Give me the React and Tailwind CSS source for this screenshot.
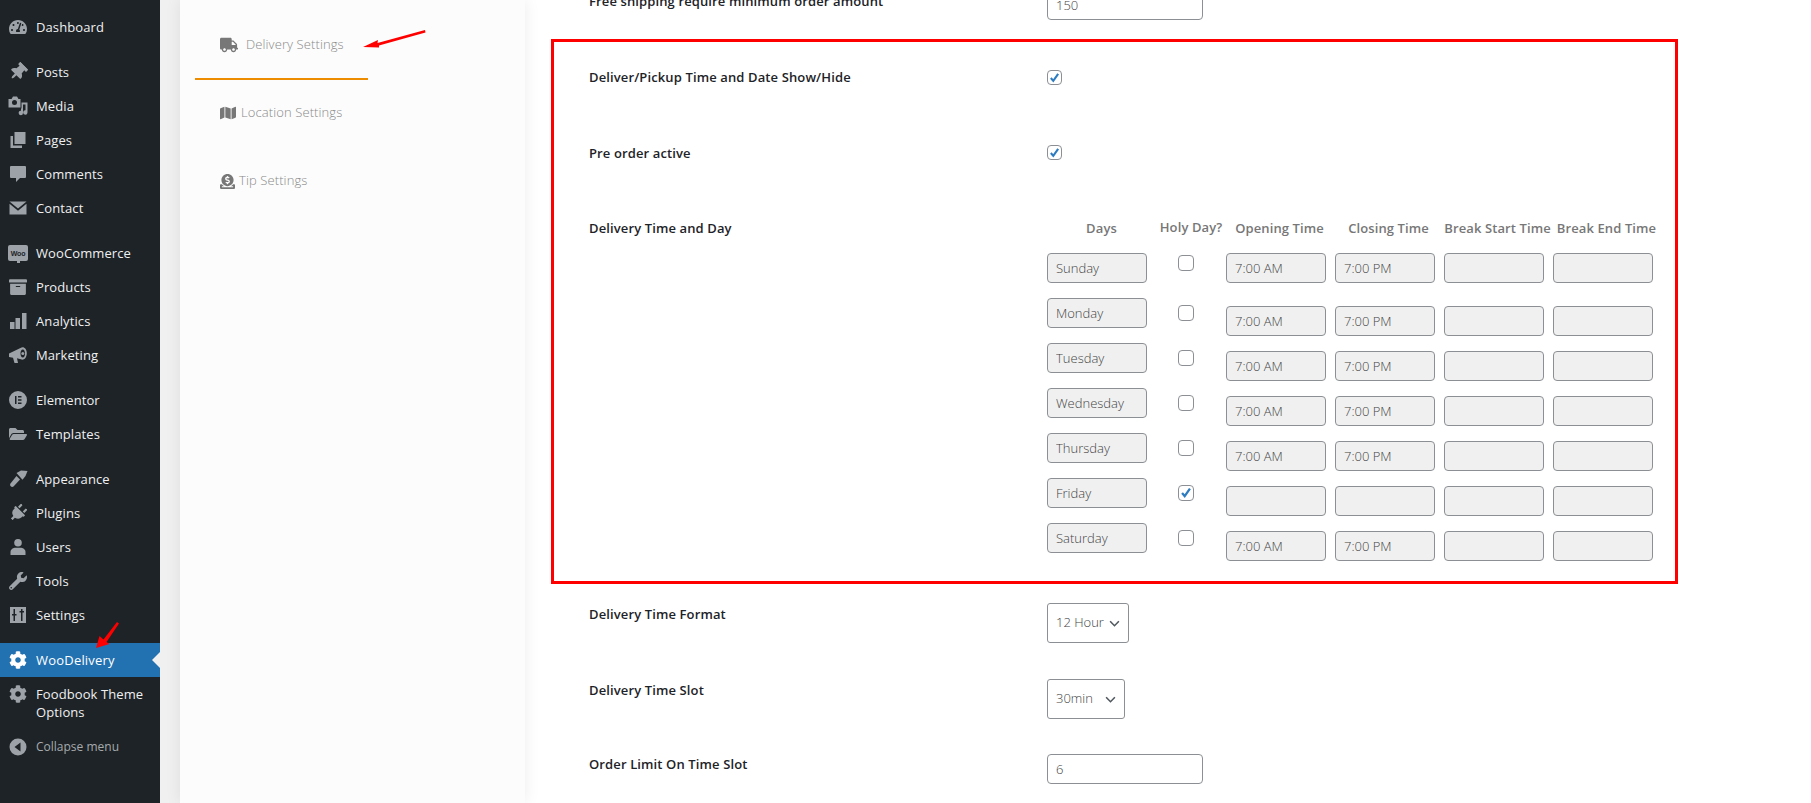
import React from "react";
import { FaTachometerAlt, FaThumbtack, FaArchive, FaFolderOpen, FaPlug, FaWrench, FaCog, FaTruck, FaMap, FaDonate } from "react-icons/fa";

const ic = "w-[20px] h-[20px]";
const Svg = ({ children }) => <svg viewBox="0 0 20 20" className={ic} fill="currentColor">{children}</svg>;

const IMedia = () => (
  <Svg>
    <path fillRule="evenodd" d="M0.500 3h3L5 .500h4L10.500 3h2v8.500h-12zM6.500 4a2.500 2.500 0 100 5 2.500 2.500 0 000-5z" />
    <path d="M13.500 6.500H19.500V16.500A2.200 2.200 0 1117.500 14.300V8.500H15V17A2.200 2.200 0 1113 14.800V12.500H13.500z" />
  </Svg>
);
const IPages = () => <Svg><path d="M6.500 2H17.500V14H6.500z" /><path d="M2.500 6H5V15.500H14V18H2.500z" /></Svg>;
const IComments = () => <Svg><path d="M3 2h14a1 1 0 011 1v10a1 1 0 01-1 1h-5l-4 4v-4H3a1 1 0 01-1-1V3a1 1 0 011-1z" /></Svg>;
const IContact = () => <Svg><path d="M1.500 3.500h17l-8.500 7zM1.500 5.800l8.500 7 8.500-7V16.500h-17z" /></Svg>;
const IWoo = () => (
  <span className="relative flex items-center justify-center w-[20px] h-[16px] rounded-[2px] bg-[#9ca2a7] text-[#1d2327] text-[7px] font-bold leading-none tracking-[-0.2px]" style={{ fontFamily: "Liberation Sans" }}>
    Woo
    <span className="absolute bottom-[-2px] left-[9px] w-[3px] h-[3px] bg-[#9ca2a7]" />
  </span>
);
const IBars = () => <Svg><path d="M2 11h4.500v7H2zM7.500 7H12v11H7.500zM14 2h4.500v16H14z" /></Svg>;
const IElementor = () => <Svg><path fillRule="evenodd" d="M10 1a9 9 0 110 18 9 9 0 010-18zM7 6v8h1.500V6zm3 0v1.500h3.500V6zm0 3.200v1.500h3.500V9.200zm0 3.300V14h3.500v-1.500z" /></Svg>;
const ISettings = () => <Svg><path fillRule="evenodd" d="M2 2h16v16H2zM5.500 4v5H4v1.500h1.500V16H7v-5.500h1.500V9H7V4zm7.500 0v2h-1.500v1.500H13V16h1.500V7.500H16V6h-1.500V4z" /></Svg>;
const ICollapse = () => <Svg><path fillRule="evenodd" d="M10 1.500a8.500 8.500 0 110 17 8.500 8.500 0 010-17zM12.500 5.500L6.500 10l6 4.500z" /></Svg>;
const IMegaphone = () => (
  <Svg>
    <path fillRule="evenodd" d="M1 8.500L12.500 3C15 .800 18.800 3 18.800 8S15.500 15.800 12.800 14.300L9 13.300 10 18H6.500L5 12.800 1 12zM14.800 4.500C13.300 4.500 12.500 6.200 12.500 8.500S13.300 12.500 14.800 12.500 17 10.800 17 8.500 16.300 4.500 14.800 4.500z" />
    <circle cx="14.800" cy="8.500" r="1.500" />
  </Svg>
);
const IBrush = () => (
  <Svg>
    <path d="M8.500 4L13 1.500 19.500 2 17.500 7 14.500 10.800z" />
    <path d="M8.500 7L12 10.500 5.500 17.500C3.800 19 1 16.500 2.500 14.500z" />
  </Svg>
);
const IUser = () => (
  <Svg>
    <circle cx="10" cy="5.800" r="3.800" />
    <path d="M2.500 18v-3c0-2.800 3-4.200 5-4.200h5c2 0 5 1.400 5 4.200v3z" />
  </Svg>
);
const IPin = () => <FaThumbtack size={18} className="rotate-45" />;
const IPlug = () => <FaPlug size={18} className="rotate-45" />;
const fa = (I, s = 18) => () => <I size={s} />;

const groups = [
  [["Dashboard", fa(FaTachometerAlt)]],
  [["Posts", IPin], ["Media", IMedia], ["Pages", IPages], ["Comments", IComments], ["Contact", IContact]],
  [["WooCommerce", IWoo], ["Products", fa(FaArchive)], ["Analytics", IBars], ["Marketing", IMegaphone]],
  [["Elementor", IElementor], ["Templates", fa(FaFolderOpen)]],
  [["Appearance", IBrush], ["Plugins", IPlug], ["Users", IUser], ["Tools", fa(FaWrench)], ["Settings", ISettings]],
];

const MenuItem = ({ label, Icon }) => (
  <div className="h-[34px] flex items-center text-[#f0f0f1]">
    <span className="w-[36px] flex justify-center text-[#9ca2a7]"><Icon /></span>
    <span className="pt-[1px] tracking-[0.1px]">{label}</span>
  </div>
);

const Sidebar = () => (
  <aside className="relative w-[160px] shrink-0 h-[803px] bg-[#1d2327] pt-[10px] text-[13px]">
    {groups.map((g, i) => (
      <div key={i} className="mb-[11px]">
        {g.map(([l, I]) => <MenuItem key={l} label={l} Icon={I} />)}
      </div>
    ))}
    <div className="relative h-[34px] flex items-center bg-[#2271b1] text-white">
      <span className="w-[36px] flex justify-center"><FaCog size={18} /></span>
      <span className="pt-[1px] tracking-[0.2px]">WooDelivery</span>
      <span className="absolute right-0 top-[9px] border-y-[8px] border-y-transparent border-r-[8px] border-r-[#f0f0f1]" />
    </div>
    <div className="flex py-[8px] text-[#f0f0f1] leading-[18px]">
      <span className="w-[36px] flex justify-center text-[#9ca2a7]"><FaCog size={18} /></span>
      <span className="tracking-[0.1px]">Foodbook Theme<br />Options</span>
    </div>
    <div className="mt-[1px] h-[34px] flex items-center text-[#a7aaad] text-[12px]">
      <span className="w-[36px] flex justify-center text-[#9ca2a7]"><ICollapse /></span>
      <span>Collapse menu</span>
    </div>
  </aside>
);

const Tab = ({ Icon, size, label, gap, active, cls = "" }) => (
  <div className={`h-[68px] flex items-center pl-[25px] text-[#8a8a8a] text-[13px] tracking-[0.1px] font-light ${cls} ${active ? "border-b-2 border-[#ee8c00] w-[173px]" : ""}`}>
    <Icon size={size} className="text-[#777]" />
    <span className={gap}>{label}</span>
  </div>
);

const Panel = () => (
  <div className="w-[345px] ml-[20px] shrink-0 bg-[#fcfcfc] shadow-[0_0_15px_rgba(0,0,0,0.08)] h-[803px] pl-[15px] pt-[12px]">
    <Tab Icon={FaTruck} size={18} label="Delivery Settings" gap="ml-[8px]" active />
    <Tab Icon={FaMap} size={16} label="Location Settings" gap="ml-[5px]" cls="-mt-[1px]" />
    <Tab Icon={FaDonate} size={15} label="Tip Settings" gap="ml-[4px]" />
  </div>
);

const Check = ({ on, small }) => (
  <span className={`${small ? "w-[15px] h-[15px]" : "w-[16px] h-[16px]"} flex items-center justify-center bg-white border border-[#8c8f94] rounded-[4px]`}>
    {on && (
      <svg viewBox="0 0 16 16" className="w-[14px] h-[14px]"><path d="M3.500 8l3 3.500L12.500 3" fill="none" stroke="#2e7cc0" strokeWidth="2.600" /></svg>
    )}
  </span>
);

const Field = ({ value = "", w = "w-[100px]", fill }) => (
  <input
    readOnly
    value={value}
    className={`${w} h-[30px] px-[8px] border border-[#8c8f94] rounded-[4px] text-[13px] font-light text-[#444] outline-none ${fill ? "bg-[#f0f0f0]" : "bg-white"}`}
  />
);

const Select = ({ label, w }) => (
  <div className={`${w} h-[40px] flex items-center justify-between pl-[8px] pr-[8px] border border-[#8c8f94] rounded-[3px] bg-white text-[13px] font-light text-[#444]`}>
    <span>{label}</span>
    <svg viewBox="0 0 12 8" className="w-[11px] h-[7px]"><path d="M1 1.500l5 5 5-5" fill="none" stroke="#50575e" strokeWidth="1.800" /></svg>
  </div>
);

const Label = ({ children, cls = "" }) => <div className={`w-[458px] shrink-0 text-[13px] font-semibold tracking-[0.12px] text-[#1d2327] leading-[18px] ${cls}`}>{children}</div>;

const days = [
  ["Sunday", "7:00 AM", "7:00 PM", false],
  ["Monday", "7:00 AM", "7:00 PM", false],
  ["Tuesday", "7:00 AM", "7:00 PM", false],
  ["Wednesday", "7:00 AM", "7:00 PM", false],
  ["Thursday", "7:00 AM", "7:00 PM", false],
  ["Friday", "", "", true],
  ["Saturday", "7:00 AM", "7:00 PM", false],
];
const heads = ["Opening Time", "Closing Time", "Break Start Time", "Break End Time"];

const Main = () => (
  <main className="flex-1 -mt-[10px] pl-[26px]">
    <div className="flex pl-[38px] h-[30px] mb-[19px]">
      <Label cls="mt-[2px]">Free shipping require minimum order amount</Label>
      <Field value="150" w="w-[156px]" />
    </div>
    <section className="w-[1127px] h-[545px] border-[3px] border-[#fe0000] pl-[35px] pt-[26px]">
      <div className="flex h-[76px]">
        <Label>Deliver/Pickup Time and Date Show/Hide</Label>
        <div className="pt-[2px]"><Check on small /></div>
      </div>
      <div className="flex h-[75px]">
        <Label>Pre order active</Label>
        <div className="pt-[1px]"><Check on small /></div>
      </div>
      <div className="flex">
        <Label>Delivery Time and Day</Label>
        <div>
          <div className="flex h-[34px] text-[13px] font-semibold text-[#777] leading-[18px] tracking-[0.1px]">
            <div className="w-[109px] text-center">Days</div>
            <div className="w-[70px] text-center -mt-[1px] whitespace-nowrap">Holy Day?</div>
            {heads.map((h) => <div key={h} className="w-[109px] pr-[2px] text-center whitespace-nowrap">{h}</div>)}
          </div>
          {days.map(([d, o, c, holy], i) => (
            <div key={d} className="flex h-[45px]">
              <div className="w-[109px]"><Field value={d} fill /></div>
              <div className={`w-[70px] pl-[22px] ${i === 0 ? "pt-[2px]" : "pt-[7px]"}`}><Check on={holy} /></div>
              <div className={`flex gap-[9px] ${i === 0 ? "" : "pt-[8px]"}`}>
                <Field value={o} fill />
                <Field value={c} fill />
                <Field fill />
                <Field fill />
              </div>
            </div>
          ))}
        </div>
      </div>
    </section>
    <div className="pl-[38px]">
      <div className="flex h-[76px] pt-[19px]">
        <Label cls="mt-[2px]">Delivery Time Format</Label>
        <Select label="12 Hour" w="w-[82px]" />
      </div>
      <div className="flex h-[75px] pt-[19px]">
        <Label cls="mt-[2px]">Delivery Time Slot</Label>
        <Select label="30min" w="w-[78px]" />
      </div>
      <div className="flex h-[76px] pt-[19px]">
        <Label cls="mt-[1px]">Order Limit On Time Slot</Label>
        <Field value="6" w="w-[156px]" />
      </div>
    </div>
  </main>
);

const Arrows = () => (
  <>
    <svg className="absolute left-[355px] top-[25px] w-[80px] h-[30px]" viewBox="0 0 80 30" fill="#fe0000">
      <path d="M8 22L23 15 22.500 18 70 5 70.500 7.500 24 20.500 24 22.500z" />
    </svg>
    <svg className="absolute left-[90px] top-[616px] w-[35px] h-[38px]" viewBox="0 0 35 38" fill="#fe0000">
      <path d="M6 32L9.500 20 13.500 23.500 27 6 29 7.500 16.500 26 19.500 28z" />
    </svg>
  </>
);

export default function App() {
  return (
    <div className="relative flex w-[1811px] h-[803px] overflow-hidden bg-white" style={{ fontFamily: '"Open Sans", sans-serif' }}>
      <Sidebar />
      <div className="absolute left-[160px] top-0 w-[20px] h-[803px] bg-[#f0f0f1]" />
      <div className="relative flex flex-1">
        <Panel />
        <Main />
      </div>
      <Arrows />
    </div>
  );
}
